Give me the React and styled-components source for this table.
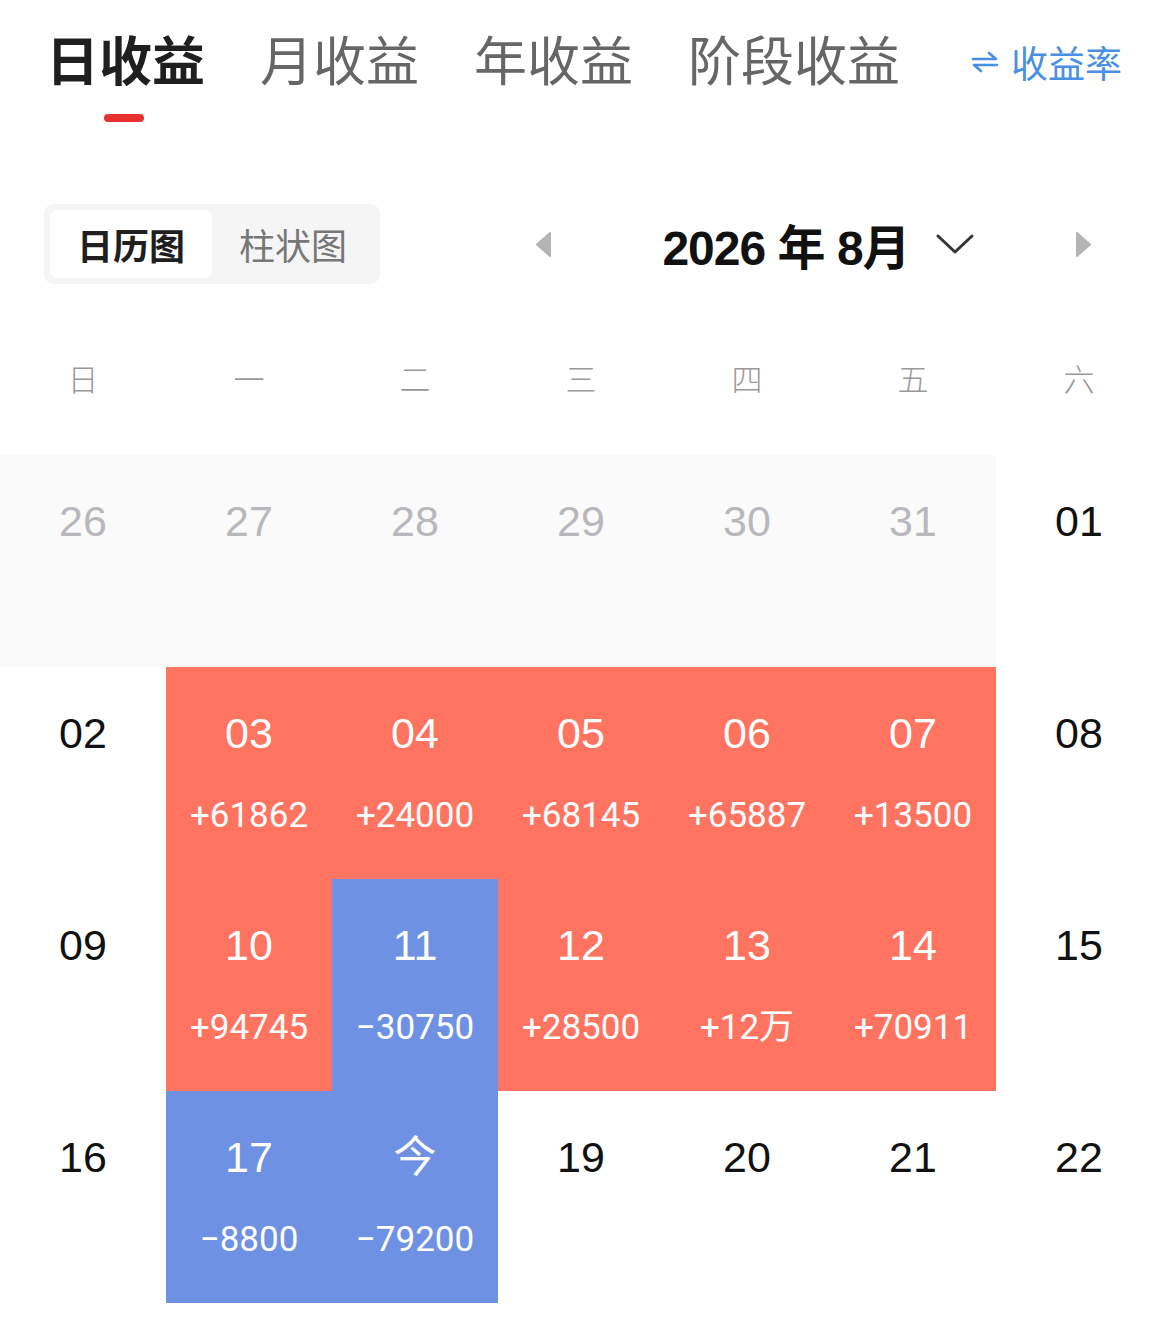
import React from 'react';
import styled, { createGlobalStyle } from 'styled-components';

const GlobalStyle = createGlobalStyle`
  body {
    margin: 0;
    background: #fff;
    font-family: "Noto Sans CJK SC", "Noto Sans", sans-serif;
  }
`;

const RED = '#ff7461';
const BLUE = '#6f91e3';

const tabs = ['日收益', '月收益', '年收益', '阶段收益'];
const weekdays = ['日', '一', '二', '三', '四', '五', '六'];

const rows = [
  [
    { day: '26', muted: true }, { day: '27', muted: true }, { day: '28', muted: true },
    { day: '29', muted: true }, { day: '30', muted: true }, { day: '31', muted: true },
    { day: '01' },
  ],
  [
    { day: '02' },
    { day: '03', value: '+61862', tone: 'up' },
    { day: '04', value: '+24000', tone: 'up' },
    { day: '05', value: '+68145', tone: 'up' },
    { day: '06', value: '+65887', tone: 'up' },
    { day: '07', value: '+13500', tone: 'up' },
    { day: '08' },
  ],
  [
    { day: '09' },
    { day: '10', value: '+94745', tone: 'up' },
    { day: '11', value: '−30750', tone: 'down' },
    { day: '12', value: '+28500', tone: 'up' },
    { day: '13', value: '+12万', tone: 'up' },
    { day: '14', value: '+70911', tone: 'up' },
    { day: '15' },
  ],
  [
    { day: '16' },
    { day: '17', value: '−8800', tone: 'down' },
    { day: '今', value: '−79200', tone: 'down' },
    { day: '19' },
    { day: '20' },
    { day: '21' },
    { day: '22' },
  ],
];

function SwapIcon() {
  return (
    <svg width="28" height="24" viewBox="0 0 28 24" fill="none" stroke="#4a90e2" strokeWidth="2.6" strokeLinecap="round" strokeLinejoin="round">
      <path d="M2 9 H25 L18 3" />
      <path d="M26 15 H3 L10 21" />
    </svg>
  );
}

function Triangle({ dir }) {
  const pts = dir === 'left' ? '15,2 15,25 2,13.5' : '2,2 2,25 15,13.5';
  return (
    <svg width="17" height="27" viewBox="0 0 17 27">
      <polygon points={pts} fill="#b4b4b4" stroke="#b4b4b4" strokeWidth="2" strokeLinejoin="round" />
    </svg>
  );
}

function Chevron() {
  return (
    <svg width="40" height="24" viewBox="0 0 40 24" fill="none" stroke="#333" strokeWidth="3" strokeLinecap="round" strokeLinejoin="round">
      <polyline points="3,4 20,20 37,4" />
    </svg>
  );
}

export default function App() {
  return (
    <Page>
      <GlobalStyle />
      <TabBar>
        {tabs.map((t, i) => (
          <Tab key={t}>
            <TabText active={i === 0}>{t}</TabText>
            {i === 0 && <Indicator />}
          </Tab>
        ))}
        <RateSwitch>
          <SwapIcon />
          <span>收益率</span>
        </RateSwitch>
      </TabBar>

      <Controls>
        <Segmented>
          <Segment active>日历图</Segment>
          <Segment>柱状图</Segment>
        </Segmented>
        <MonthNav>
          <Triangle dir="left" />
          <MonthTitle>
            <span>2026 年 8月</span>
            <Chevron />
          </MonthTitle>
          <Triangle dir="right" />
        </MonthNav>
      </Controls>

      <WeekRow>
        {weekdays.map((w) => (
          <WeekLabel key={w}>{w}</WeekLabel>
        ))}
      </WeekRow>

      <Calendar>
        {rows.flat().map((c, i) => (
          <Cell key={i} tone={c.tone} muted={c.muted}>
            <DayNum tone={c.tone} muted={c.muted}>{c.day}</DayNum>
            {c.value && <Value>{c.value}</Value>}
          </Cell>
        ))}
      </Calendar>
    </Page>
  );
}

const Page = styled.div`
  width: 1170px;
  padding-bottom: 20px;
`;

const TabBar = styled.div`
  display: flex;
  align-items: flex-start;
  gap: 55px;
  padding: 31px 0 0 46px;
  height: 91px;
`;

const Tab = styled.div`
  display: flex;
  flex-direction: column;
  align-items: center;
`;

const TabText = styled.div`
  font-size: 53px;
  line-height: 54px;
  color: ${(p) => (p.active ? '#1f1f1f' : '#666')};
  font-weight: ${(p) => (p.active ? 700 : 400)};
`;

const Indicator = styled.div`
  width: 40px;
  height: 8px;
  border-radius: 4px;
  background: #e8302f;
  margin-top: 29px;
  margin-right: 4px;
`;

const RateSwitch = styled.div`
  margin-left: auto;
  margin-right: 48px;
  margin-top: 9px;
  display: flex;
  align-items: center;
  gap: 12px;
  color: #4a90e2;
  font-size: 37px;
  line-height: 44px;
`;

const Controls = styled.div`
  display: flex;
  align-items: center;
  height: 80px;
  margin-top: 82px;
  padding-left: 44px;
`;

const Segmented = styled.div`
  display: flex;
  width: 336px;
  height: 80px;
  box-sizing: border-box;
  padding: 6px;
  background: #f5f5f5;
  border-radius: 10px;
`;

const Segment = styled.div`
  flex: 1;
  display: flex;
  align-items: center;
  justify-content: center;
  border-radius: 8px;
  font-size: 36px;
  background: ${(p) => (p.active ? '#fff' : 'transparent')};
  color: ${(p) => (p.active ? '#1f1f1f' : '#777')};
  font-weight: ${(p) => (p.active ? 700 : 400)};
`;

const MonthNav = styled.div`
  display: flex;
  align-items: center;
  justify-content: space-between;
  width: 557px;
  margin-left: 155px;
`;

const MonthTitle = styled.div`
  display: flex;
  align-items: center;
  gap: 25px;
  padding-left: 10px;
  font-family: "Liberation Sans", "Noto Sans CJK SC", sans-serif;
  font-weight: 700;
  font-size: 48px;
  letter-spacing: -1px;
  color: #111;
`;

const WeekRow = styled.div`
  display: grid;
  grid-template-columns: repeat(7, 166px);
  margin-top: 63px;
  height: 60px;
  margin-bottom: 48px;
`;

const WeekLabel = styled.div`
  display: flex;
  align-items: center;
  justify-content: center;
  font-size: 31px;
  font-weight: 300;
  color: #999;
`;

const Calendar = styled.div`
  display: grid;
  grid-template-columns: repeat(7, 166px);
  grid-auto-rows: 212px;
`;

const Cell = styled.div`
  display: flex;
  flex-direction: column;
  align-items: center;
  background: ${(p) => (p.tone === 'up' ? RED : p.tone === 'down' ? BLUE : p.muted ? '#fafafa' : '#fff')};
`;

const DayNum = styled.div`
  margin-top: 44px;
  font-family: "Liberation Sans", "Noto Sans CJK SC", sans-serif;
  font-size: 43px;
  line-height: 44px;
  color: ${(p) => (p.tone ? '#fff' : p.muted ? '#b8b8bc' : '#111')};
`;

const Value = styled.div`
  margin-top: 43px;
  font-family: Roboto, "Noto Sans CJK SC", sans-serif;
  font-size: 35px;
  line-height: 36px;
  color: #fff;
`;
